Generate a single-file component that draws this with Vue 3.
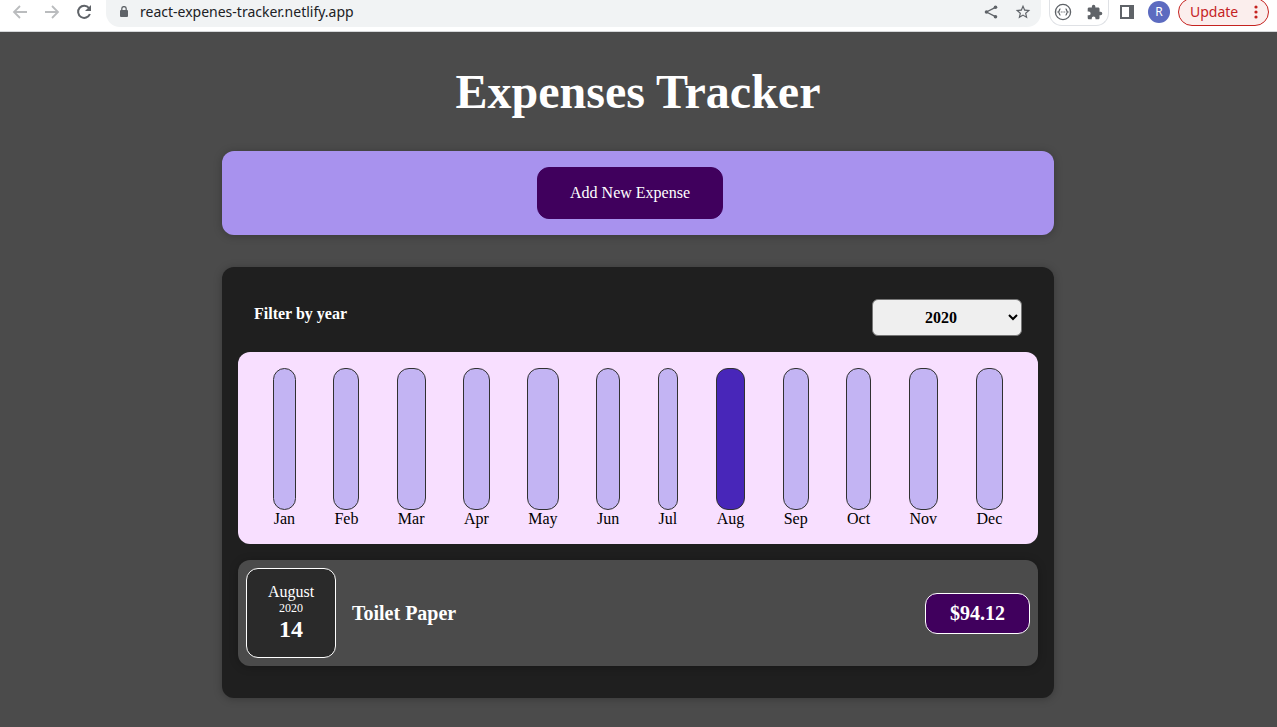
<script setup>
import { ref } from 'vue'

const year = ref('2020')
const years = ['2019', '2020', '2021', '2022']
const months = ['Jan', 'Feb', 'Mar', 'Apr', 'May', 'Jun', 'Jul', 'Aug', 'Sep', 'Oct', 'Nov', 'Dec']
const spent = { Aug: 94.12 }
const expenses = [{ month: 'August', year: '2020', day: '14', title: 'Toilet Paper', amount: '$94.12' }]
</script>

<template>
  <div class="window">
    <header class="toolbar">
      <nav class="history">
        <button class="icon-btn faded" aria-label="Back">
          <svg width="16" height="16" viewBox="0 0 16 16"><path d="M15 8H2.500M8 2 2 8l6 6" /></svg>
        </button>
        <button class="icon-btn faded" aria-label="Forward">
          <svg width="16" height="16" viewBox="0 0 16 16"><path d="M1 8h12.500M8 2l6 6-6 6" /></svg>
        </button>
        <button class="icon-btn" aria-label="Reload">
          <svg width="16" height="16" viewBox="0 0 16 16">
            <path class="thick" d="M13 4A6.100 6.100 0 1 0 13.900 10" />
            <path class="solid" d="M15 1v6H9z" />
          </svg>
        </button>
      </nav>
      <div class="address">
        <svg class="lock" width="8" height="12" viewBox="0 0 8 12">
          <path class="solid" d="M1 4h6a1 1 0 0 1 1 1v5a1 1 0 0 1-1 1H1a1 1 0 0 1-1-1V5a1 1 0 0 1 1-1z" />
          <path class="thin" d="M1.800 4.500V2.800a2.200 2.200 0 0 1 4.400 0v1.700" />
        </svg>
        <input class="url" type="text" value="react-expenes-tracker.netlify.app" aria-label="Address" />
        <button class="icon-btn" aria-label="Share">
          <svg width="14" height="14" viewBox="0 0 14 14">
            <path class="thin" d="M11.500 2.300 2.500 7l9 4.700" />
            <circle class="solid" cx="11.500" cy="2.300" r="1.800" />
            <circle class="solid" cx="2.500" cy="7" r="1.800" />
            <circle class="solid" cx="11.500" cy="11.700" r="1.800" />
          </svg>
        </button>
        <button class="icon-btn" aria-label="Bookmark">
          <svg width="16" height="16" viewBox="1 1 22 22">
            <path class="solid" d="M22 9.240l-7.190-.62L12 2 9.190 8.630 2 9.240l5.460 4.730L5.820 21 12 17.270 18.180 21l-1.630-7.030L22 9.240zM12 15.400l-3.760 2.270 1-4.280-3.320-2.880 4.380-.38L12 6.100l1.710 4.040 4.380.38-3.320 2.880 1 4.280L12 15.400z" />
          </svg>
        </button>
      </div>
      <div class="extensions">
        <button class="icon-btn" aria-label="JSON viewer">
          <svg width="18" height="18" viewBox="0 0 18 18">
            <circle class="thin" cx="9" cy="9" r="7.600" />
            <path class="thin" d="M6.400 6C5 6 5.700 8.600 4.300 9c1.400.4.7 3 2.100 3M11.600 6c1.400 0 .7 2.600 2.100 3-1.400.4-.7 3-2.100 3" />
            <path class="solid" d="M6.800 8.500h1v1h-1zM8.500 8.500h1v1h-1zM10.200 8.500h1v1h-1z" />
          </svg>
        </button>
        <button class="icon-btn" aria-label="Extensions">
          <svg width="16" height="16" viewBox="1 0 23 23">
            <path class="solid" d="M20.500 11H19V7c0-1.100-.9-2-2-2h-4V3.500a2.500 2.500 0 0 0-5 0V5H4c-1.100 0-2 .9-2 2v3.800h1.500a2.700 2.700 0 0 1 0 5.400H2V20c0 1.100.9 2 2 2h3.800v-1.500a2.700 2.700 0 0 1 5.400 0V22H17c1.100 0 2-.9 2-2v-4h1.500a2.500 2.500 0 0 0 0-5z" />
          </svg>
        </button>
      </div>
      <button class="icon-btn panel" aria-label="Side panel">
        <svg width="14" height="14" viewBox="0 0 14 14">
          <path class="solid" fill-rule="evenodd" d="M0 0h14v14H0zM2 2v10h7V2z" />
        </svg>
      </button>
      <button class="avatar" aria-label="Profile">R</button>
      <button class="update">
        Update
        <svg width="4" height="14" viewBox="0 0 4 14">
          <circle cx="2" cy="2" r="1.600" /><circle cx="2" cy="7" r="1.600" /><circle cx="2" cy="12" r="1.600" />
        </svg>
      </button>
    </header>

    <main class="page">
      <div class="content">
        <h1>Expenses Tracker</h1>

        <section class="new-expense">
          <button class="add">Add New Expense</button>
        </section>

        <section class="expenses">
          <div class="filter">
            <label for="year">Filter by year</label>
            <select id="year" v-model="year">
              <option v-for="y in years" :key="y">{{ y }}</option>
            </select>
          </div>

          <div class="chart">
            <div v-for="m in months" :key="m" class="month">
              <div class="bar" :class="{ full: spent[m] }"></div>
              <span>{{ m }}</span>
            </div>
          </div>

          <ul class="list">
            <li v-for="e in expenses" :key="e.title" class="item">
              <div class="date">
                <span class="date-month">{{ e.month }}</span>
                <span class="date-year">{{ e.year }}</span>
                <span class="date-day">{{ e.day }}</span>
              </div>
              <h2>{{ e.title }}</h2>
              <div class="amount">{{ e.amount }}</div>
            </li>
          </ul>
        </section>
      </div>
    </main>
  </div>
</template>

<style>
body {
  background: #4b4b4b;
}
</style>

<style scoped>
* {
  box-sizing: border-box;
}

.window {
  font-family: "Liberation Serif", "Times New Roman", serif;
  font-size: 16px;
  line-height: 18px;
  color: #fff;
}

button {
  font: inherit;
  border: 0;
  padding: 0;
  cursor: pointer;
}

.toolbar {
  display: flex;
  align-items: flex-start;
  height: 32px;
  background: #fff;
  border-bottom: 1px solid #d5d7d9;
  overflow: hidden;
  font-family: "Noto Sans", "Open Sans", sans-serif;
}

.icon-btn {
  display: flex;
  align-items: center;
  justify-content: center;
  height: 24px;
  background: none;
  color: #5f6368;
}

.icon-btn.faded {
  color: #babcbe;
}

.toolbar path,
.toolbar circle {
  fill: none;
  stroke: currentColor;
  stroke-width: 1.8;
}

.toolbar .thin {
  stroke-width: 1.3;
}

.toolbar .thick {
  stroke-width: 2;
}

.toolbar .solid {
  fill: currentColor;
  stroke: none;
}

.history {
  display: flex;
  gap: 16px;
  padding: 0 14px 0 12px;
}

.address {
  display: flex;
  align-items: center;
  flex: 1;
  height: 27px;
  padding: 0 10px 3px 14px;
  border-radius: 0 0 14px 14px;
  background: #f1f3f4;
  color: #5f6368;
}

.url {
  flex: 1;
  min-width: 0;
  margin-left: 12px;
  padding: 0;
  border: 0;
  outline: 0;
  background: none;
  color: #202124;
  font: 14px/20px "Noto Sans", "Open Sans", sans-serif;
}

.address .icon-btn + .icon-btn {
  margin-left: 17px;
}

.extensions {
  display: flex;
  gap: 15px;
  height: 26px;
  margin: 0 11px 0 8px;
  padding: 0 5px 0 4px;
  border: 1px solid #dfe1e5;
  border-top: 0;
  border-radius: 0 0 13px 13px;
}

.panel {
  margin-right: 14px;
}

.avatar {
  width: 22px;
  height: 22px;
  margin: 1px 8px 0 0;
  border-radius: 50%;
  background: #5c6bc0;
  color: #fff;
  font-size: 12px;
  line-height: 22px;
}

.update {
  display: flex;
  align-items: center;
  justify-content: space-between;
  width: 91px;
  height: 28px;
  margin: -2px 8px 0 0;
  padding: 0 10px 0 11px;
  border: 1px solid #c5221f;
  border-radius: 14px;
  background: #fbeeed;
  color: #c5221f;
  font-size: 14px;
}

.update circle {
  fill: currentColor;
  stroke: none;
}

.page {
  padding: 32px 1px 28px 0;
}

.content {
  max-width: 832px;
  margin: 0 auto;
}

h1 {
  margin: 0 0 32px;
  font-size: 48px;
  line-height: 55px;
  text-align: center;
}

.new-expense,
.expenses {
  padding: 16px;
  border-radius: 12px;
  box-shadow: 0 1px 8px rgba(0, 0, 0, 0.25);
}

.new-expense {
  display: flex;
  justify-content: center;
  margin-bottom: 32px;
  background: #a892ee;
}

.add {
  margin-right: 16px;
  padding: 16px 32px;
  border: 1px solid #40005d;
  border-radius: 12px;
  background: #40005d;
  color: #fff;
}

.expenses {
  padding-bottom: 32px;
  background: #1f1f1f;
}

.filter {
  display: flex;
  align-items: center;
  justify-content: space-between;
  padding: 16px;
  font-weight: bold;
}

.filter label {
  padding-bottom: 7px;
}

.filter select {
  width: 150px;
  height: 37px;
  border: 1px solid #767676;
  border-radius: 6px;
  background: #efefef;
  color: #000;
  font: inherit;
  text-align: center;
}

.chart {
  display: flex;
  justify-content: space-around;
  padding: 16px;
  border-radius: 12px;
  background: #f8dfff;
  color: #000;
  text-align: center;
}

.month {
  display: flex;
  flex-direction: column;
}

.month span {
  padding: 0 1px;
}

.bar {
  height: 142px;
  border: 1px solid #313131;
  border-radius: 12px;
  background: #c3b4f3;
}

.bar.full {
  background: #4826b9;
}

.list {
  margin: 0;
  padding: 0;
  list-style: none;
}

.item {
  display: flex;
  align-items: center;
  gap: 16px;
  margin-top: 16px;
  padding: 8px;
  border-radius: 12px;
  background: #4b4b4b;
  box-shadow: 0 1px 8px rgba(0, 0, 0, 0.25);
}

.date {
  display: flex;
  flex-direction: column;
  align-items: center;
  justify-content: center;
  width: 90px;
  height: 90px;
  border: 1px solid #fff;
  border-radius: 12px;
  background: #2a2a2a;
}

.date-year {
  font-size: 12px;
  line-height: 14px;
}

.date-day {
  font-size: 24px;
  font-weight: bold;
  line-height: 28px;
}

h2 {
  flex: 1;
  margin: 0;
  font-size: 20px;
  line-height: 23px;
}

.amount {
  padding: 8px 24px;
  border: 1px solid #fff;
  border-radius: 12px;
  background: #40005d;
  font-size: 20px;
  font-weight: bold;
  line-height: 23px;
}
</style>
